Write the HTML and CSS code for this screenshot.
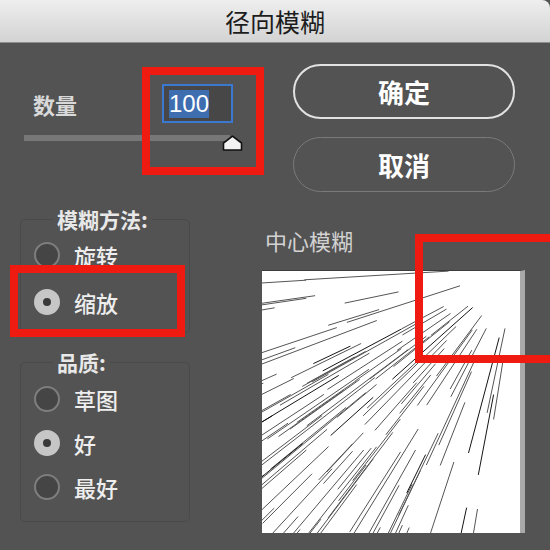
FILE: index.html
```html
<!DOCTYPE html>
<html lang="zh">
<head>
  <meta charset="UTF-8">
  <title>径向模糊</title>
  <link rel="stylesheet" href="styles.css">
</head>
<body>
  <div class="blur-dialog">
    <div class="blur-titlebar">径向模糊</div>
    <div class="blur-content">
      <div class="blur-left">
        <div class="blur-amount">
          <span class="blur-amount-label">数量</span>
          <div class="blur-amount-input"><span class="blur-selected">100</span></div>
        </div>
        <div class="blur-slider">
          <div class="blur-track"></div>
          <svg class="blur-thumb" width="21" height="16" viewBox="0 0 21 16">
            <path d="M1.5 15 V8 L10.5 1.2 L19.5 8 V15 Z" fill="#f2f2f2" stroke="#111" stroke-width="1.6" stroke-linejoin="round"/>
          </svg>
        </div>
        <fieldset class="blur-group">
          <legend>模糊方法:</legend>
          <div class="blur-option"><span class="blur-radio"></span>旋转</div>
          <div class="blur-option blur-option-wide"><span class="blur-radio blur-radio-on"></span>缩放</div>
        </fieldset>
        <fieldset class="blur-group blur-group-quality">
          <legend>品质:</legend>
          <div class="blur-option"><span class="blur-radio"></span>草图</div>
          <div class="blur-option"><span class="blur-radio blur-radio-on"></span>好</div>
          <div class="blur-option"><span class="blur-radio"></span>最好</div>
        </fieldset>
      </div>
      <div class="blur-right">
        <div class="blur-buttons">
          <div class="blur-btn">确定</div>
          <div class="blur-btn blur-btn-cancel">取消</div>
        </div>
        <div class="blur-preview-title">中心模糊</div>
        <div class="blur-preview">
          <svg id="previewLines" width="258" height="262" viewBox="0 0 258 262"></svg>
        </div>
      </div>
    </div>

    <!-- red annotation frames -->
    <div class="blur-mark blur-mark-amount"></div>
    <div class="blur-mark blur-mark-method"></div>
    <div class="blur-mark blur-mark-center"></div>
  </div>
  <script src="preview.js"></script>
</body>
</html>
```

FILE: styles.css
```css
* {
  box-sizing: border-box;
}

body {
  margin: 0;
  background-color: #535353;
  font-family: "Noto Sans CJK SC", "Liberation Sans", sans-serif;
  overflow: hidden;
}

.blur-dialog {
  position: relative;
  width: 550px;
  height: 550px;
}

.blur-titlebar {
  height: 43px;
  border-bottom: 1px solid #8e8e8e;
  border-top-right-radius: 8px;
  background: linear-gradient(#eeeeee, #d3d3d3);
  text-align: center;
  font-size: 25px;
  line-height: 42px;
  color: #1c1c1c;
}

.blur-content {
  display: flex;
}

.blur-left {
  width: 262px;
}

.blur-right {
  flex: 1;
}

.blur-amount {
  display: flex;
  align-items: center;
  margin-top: 41px;
}

.blur-amount-label {
  width: 129px;
  margin-left: 33px;
  font-size: 22px;
  font-weight: bold;
  color: #d9d9d9;
}

.blur-amount-input {
  display: flex;
  align-items: center;
  width: 71px;
  height: 39px;
  padding-left: 5px;
  border: 2px solid #3b78cf;
  background-color: #474747;
}

.blur-selected {
  font-family: "Liberation Sans", sans-serif;
  font-size: 24px;
  line-height: 28px;
  color: #ffffff;
  background-color: #3e6db0;
}

.blur-slider {
  position: relative;
  width: 219px;
  height: 16px;
  margin: 12px 0 0 24px;
}

.blur-track {
  width: 206px;
  height: 6px;
  margin-top: 5px;
  background-color: #777777;
}

.blur-thumb {
  position: absolute;
  left: 198px;
  top: 0;
}

.blur-group {
  width: 170px;
  margin: 56px 0 0 20px;
  padding: 4px 0 10px 13px;
  border: 1px solid #4a4a4a;
  border-radius: 5px;
}

.blur-group legend {
  margin-left: 19px;
  padding: 0 4px;
  font-size: 21px;
  line-height: 24px;
  font-weight: bold;
  color: #e8e8e8;
}

.blur-group-quality {
  margin-top: 17px;
  padding: 5px 0 14px 13px;
}

.blur-option {
  display: flex;
  align-items: center;
  height: 40px;
  font-size: 22px;
  font-weight: 500;
  color: #eeeeee;
}

.blur-option + .blur-option {
  margin-top: 4px;
}

.blur-option-wide + .blur-option,
.blur-option + .blur-option-wide {
  margin-top: 7px;
}

.blur-radio {
  position: relative;
  width: 26px;
  height: 26px;
  margin-right: 14px;
  border: 2px solid #7e7e7e;
  border-radius: 50%;
  background-color: #454545;
}

.blur-radio-on {
  border-color: #c6c6c6;
  background-color: #c6c6c6;
}

.blur-radio-on:after {
  content: "";
  position: absolute;
  left: 7px;
  top: 7px;
  width: 8px;
  height: 8px;
  border-radius: 50%;
  background-color: #3a3a3a;
}

.blur-buttons {
  margin: 21px 0 0 31px;
}

.blur-btn {
  display: flex;
  align-items: center;
  justify-content: center;
  width: 222px;
  height: 55px;
  border: 2px solid #e2e2e2;
  border-radius: 28px;
  font-size: 26px;
  font-weight: bold;
  color: #ffffff;
}

.blur-btn-cancel {
  margin-top: 18px;
  border: 1.5px solid #7a7a7a;
}

.blur-preview-title {
  margin: 33px 0 0 3px;
  font-size: 22px;
  line-height: 30px;
  color: #d2d2d2;
}

.blur-preview {
  width: 263px;
  height: 263px;
  margin-top: 15px;
  border-top: 1px solid #3c3c3c;
  border-right: 5px solid #a9a9a9;
  background-color: #ffffff;
  overflow: hidden;
}

.blur-preview svg {
  display: block;
}

.blur-mark {
  position: absolute;
  border: 8px solid #ef1a10;
}

.blur-mark-amount {
  left: 142px;
  top: 67px;
  width: 122px;
  height: 108px;
}

.blur-mark-method {
  left: 10px;
  top: 265px;
  width: 175px;
  height: 72px;
}

.blur-mark-center {
  left: 415px;
  top: 234px;
  width: 145px;
  height: 129px;
}
```

FILE: preview.js
```js
// radial "zoom" streaks drawn from the top-right corner of the preview
var svg = document.getElementById('previewLines');
var ns = 'http://www.w3.org/2000/svg';
var seed = 4242;

function rnd() {
  seed = (seed * 16807) % 2147483647;
  return (seed - 1) / 2147483646;
}

var cx = 256, cy = -4;

for (var i = 0; i < 125; i++) {
  // angle between pointing left (PI) and pointing down (PI / 2), denser in the middle
  var u = rnd() < 0.7 ? (rnd() + rnd()) / 2 : rnd();
  var t = Math.PI / 2 + 0.05 + u * (Math.PI / 2 - 0.08);
  var r1 = 60 + rnd() * 290;
  var r2 = r1 + 40 + rnd() * 110;
  var line = document.createElementNS(ns, 'line');
  line.setAttribute('x1', (cx + r1 * Math.cos(t)).toFixed(1));
  line.setAttribute('y1', (cy + r1 * Math.sin(t)).toFixed(1));
  line.setAttribute('x2', (cx + r2 * Math.cos(t)).toFixed(1));
  line.setAttribute('y2', (cy + r2 * Math.sin(t)).toFixed(1));
  line.setAttribute('stroke', rnd() < 0.12 ? '#151515' : '#555');
  line.setAttribute('stroke-width', '1');
  svg.appendChild(line);
}
```
